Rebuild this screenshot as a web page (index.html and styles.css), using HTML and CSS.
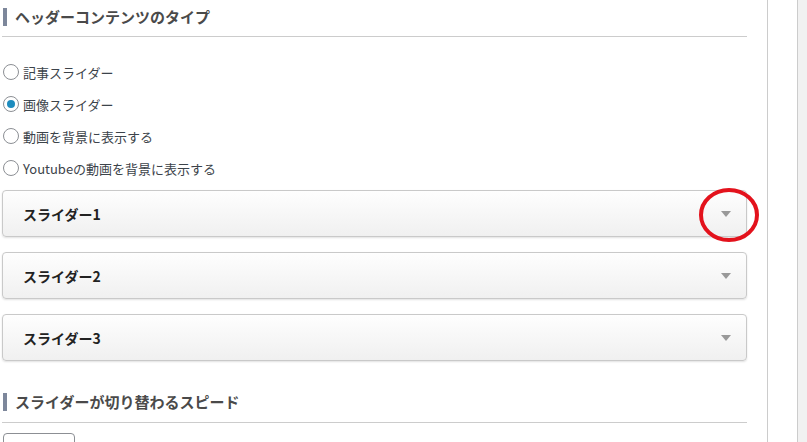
FILE: index.html
```html
<!DOCTYPE html>
<html lang="ja">
<head>
<meta charset="utf-8">
<link rel="stylesheet" href="styles.css">
</head>
<body>
<div class="page">
  <main class="main">
    <div class="section-head first">
      <h2 class="heading">ヘッダーコンテンツのタイプ</h2>
    </div>
    <div class="radios">
      <label class="radio"><input type="radio" name="t"><span>記事スライダー</span></label>
      <label class="radio"><input type="radio" name="t" checked><span>画像スライダー</span></label>
      <label class="radio"><input type="radio" name="t"><span>動画を背景に表示する</span></label>
      <label class="radio"><input type="radio" name="t"><span>Youtubeの動画を背景に表示する</span></label>
    </div>
    <div class="accordions">
      <div class="acc"><span class="acc-title">スライダー1</span><span class="arrow"></span></div>
      <div class="acc"><span class="acc-title">スライダー2</span><span class="arrow"></span></div>
      <div class="acc"><span class="acc-title">スライダー3</span><span class="arrow"></span></div>
    </div>
    <div class="section-head second">
      <h2 class="heading">スライダーが切り替わるスピード</h2>
    </div>
    <div class="input-row"><div class="input-box"></div></div>
  </main>
  <div class="gutter"></div>
  <div class="rail"></div>
  <svg class="mark" width="64" height="58" viewBox="0 0 64 58"><ellipse cx="32" cy="29" rx="28" ry="25" fill="none" stroke="#e3121c" stroke-width="4"/></svg>
</div>
</body>
</html>
```
FILE: styles.css
```css
* { box-sizing: border-box; }
html, body { margin: 0; padding: 0; background: #fff; }
body {
  font-family: "Noto Sans CJK JP", "Noto Sans", sans-serif;
  color: #3c434a;
  overflow: hidden;
  height: 442px;
}
.page {
  position: relative;
  display: flex;
  height: 442px;
}
.main {
  width: 768px;
  padding-left: 2px;
  padding-right: 20px;
  border-right: 1px solid #ccc;
  flex: none;
}
.gutter { width: 30px; flex: none; border-right: 1px solid #ccc; }
.rail { flex: 1; background: #f1f1f1; }
.section-head {
  border-bottom: 1px solid #ccc;
  padding-bottom: 10px;
}
.section-head.first { padding-top: 8px; }
.section-head.second { margin-top: 32px; padding-bottom: 11px; }
.heading {
  margin: 0 0 0 1px;
  border-left: 4px solid #7d879b;
  padding-left: 8px;
  font-size: 15px;
  line-height: 18px;
  height: 18px;
  font-weight: bold;
  color: #4a4a4a;
}
.radios {
  margin-top: 19px;
  display: flex;
  flex-direction: column;
}
.radio {
  display: flex;
  align-items: center;
  height: 32px;
  font-size: 13px;
  color: #3c434a;
}
.radio input {
  appearance: none;
  -webkit-appearance: none;
  margin: 0 4px 0 1px;
  width: 16px;
  height: 16px;
  border: 1px solid #8c8f94;
  border-radius: 50%;
  background: #fff;
  position: relative;
  flex: none;
}
.radio input:checked::before {
  content: "";
  position: absolute;
  left: 3px;
  top: 3px;
  width: 8px;
  height: 8px;
  border-radius: 50%;
  background: #2271b1;
  background: #1e8cbe;
}
.accordions {
  margin-top: 6px;
  display: flex;
  flex-direction: column;
  gap: 15px;
}
.acc {
  height: 47px;
  border: 1px solid #c9c9c9;
  border-radius: 4px;
  background: linear-gradient(#fefefe, #f0f0f0);
  box-shadow: 0 1px 2px rgba(0,0,0,0.12);
  display: flex;
  align-items: center;
  justify-content: space-between;
  padding: 0 15px 0 20px;
}
.acc-title {
  font-size: 14px;
  font-weight: bold;
  color: #222;
}
.arrow {
  width: 0;
  height: 0;
  border-left: 5px solid transparent;
  border-right: 5px solid transparent;
  border-top: 6px solid #999;
}
.input-row { margin-top: 10px; padding-left: 1px; }
.input-box {
  width: 72px;
  height: 30px;
  border: 1px solid #8c8f94;
  border-radius: 4px;
}
.mark {
  position: absolute;
  left: 697px;
  top: 186px;
}
```
